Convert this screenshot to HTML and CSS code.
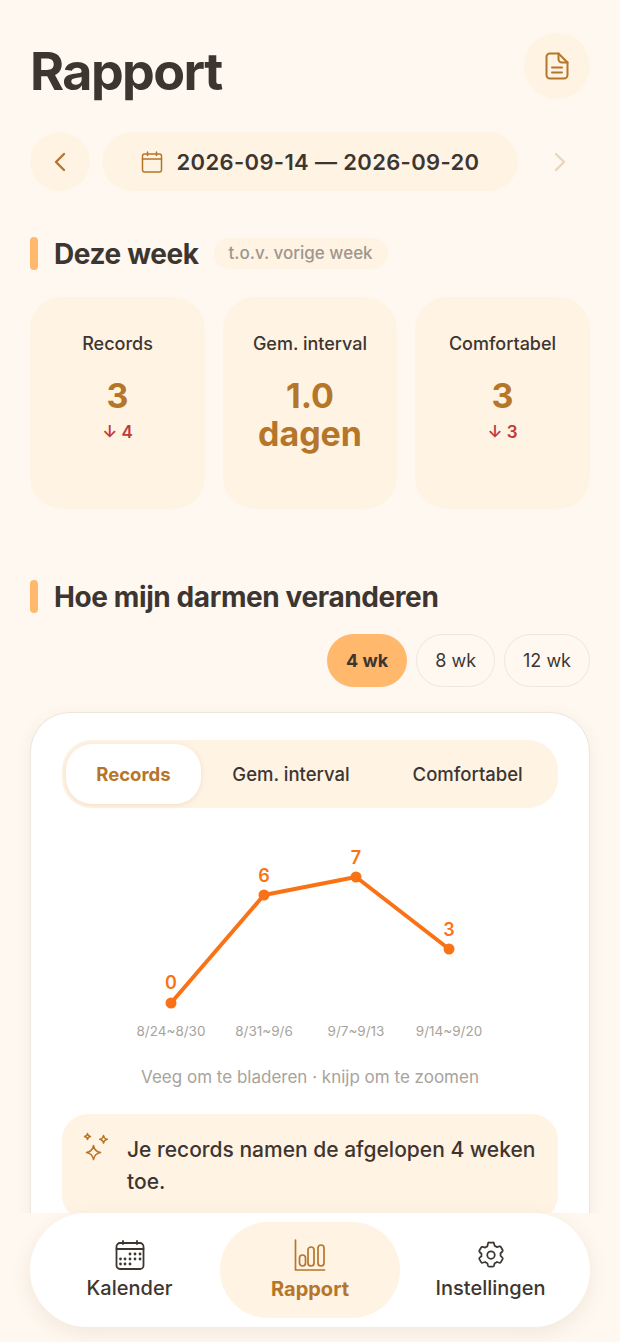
FILE: index.html
```html
<!DOCTYPE html>
<html>
<head>
    <meta charset="UTF-8" />
    <meta name="viewport" content="width=device-width, initial-scale=1.0" />
    <title>Rapport</title>
    <link rel="stylesheet" href="styles.css">
</head>
<body>
    <div class="screen">
        <div class="content">
            <header class="top">
                <h1>Rapport</h1>
                <button class="round-btn doc-btn">
                    <svg width="26" height="28" viewBox="0 0 26 28" fill="none" stroke="#b5762a" stroke-width="2" stroke-linejoin="round" stroke-linecap="round">
                        <path d="M6 1.5h8.5L23.5 10.5v12.5a3.5 3.5 0 0 1-3.5 3.5H6a3.5 3.5 0 0 1-3.5-3.5V5A3.5 3.5 0 0 1 6 1.5z"/>
                        <path d="M14.5 1.5v5.5a3.5 3.5 0 0 0 3.5 3.5h5.5"/>
                        <path d="M8 15.5h10M8 20.5h10"/>
                    </svg>
                </button>
            </header>

            <div class="date-row">
                <button class="round-btn nav-btn">
                    <svg width="14" height="20" viewBox="0 0 14 20" fill="none" stroke="#b5762a" stroke-width="2.4" stroke-linecap="round" stroke-linejoin="round"><path d="M11 2L3 10l8 8"/></svg>
                </button>
                <div class="date-pill">
                    <svg width="22" height="22" viewBox="0 0 22 22" fill="none" stroke="#b5762a" stroke-width="1.5" stroke-linecap="round" stroke-linejoin="round">
                        <rect x="1.5" y="3" width="19" height="18" rx="2"/>
                        <path d="M1.5 8h19M6.5 1v3.5M15.500 1v3.5"/>
                    </svg>
                    <span>2026-09-14 — 2026-09-20</span>
                </div>
                <button class="round-btn nav-btn next">
                    <svg width="14" height="20" viewBox="0 0 14 20" fill="none" stroke="#e9d6bd" stroke-width="2.4" stroke-linecap="round" stroke-linejoin="round"><path d="M3 2l8 8-8 8"/></svg>
                </button>
            </div>

            <div class="section-head week-head">
                <span class="section-bar"></span>
                <h2>Deze week</h2>
                <span class="compare">t.o.v. vorige week</span>
            </div>

            <div class="stats">
                <div class="stat">
                    <div class="stat-label">Records</div>
                    <div class="stat-value">3</div>
                    <div class="stat-delta">↓ 4</div>
                </div>
                <div class="stat">
                    <div class="stat-label">Gem. interval</div>
                    <div class="stat-value">1.0 dagen</div>
                </div>
                <div class="stat">
                    <div class="stat-label">Comfortabel</div>
                    <div class="stat-value">3</div>
                    <div class="stat-delta">↓ 3</div>
                </div>
            </div>

            <div class="section-head trend-head">
                <span class="section-bar"></span>
                <h2>Hoe mijn darmen veranderen</h2>
            </div>

            <div class="chips">
                <button class="chip active">4 wk</button>
                <button class="chip">8 wk</button>
                <button class="chip">12 wk</button>
            </div>

            <div class="chart-card">
                <div class="tabs">
                    <div class="tab active">Records</div>
                    <div class="tab">Gem. interval</div>
                    <div class="tab">Comfortabel</div>
                </div>

                <svg class="chart" width="496" height="220" viewBox="0 0 496 220">
                    <polyline points="109,175 202,67 294,49 387,121" fill="none" stroke="#f97316" stroke-width="4" stroke-linejoin="round"/>
                    <circle cx="109" cy="175" r="5.500" fill="#f97316"/>
                    <circle cx="202" cy="67" r="5.500" fill="#f97316"/>
                    <circle cx="294" cy="49" r="5.500" fill="#f97316"/>
                    <circle cx="387" cy="121" r="5.500" fill="#f97316"/>
                    <text class="point" x="109" y="161">0</text>
                    <text class="point" x="202" y="54">6</text>
                    <text class="point" x="294" y="36">7</text>
                    <text class="point" x="387" y="108">3</text>
                    <text class="tick" x="109" y="208">8/24~8/30</text>
                    <text class="tick" x="202" y="208">8/31~9/6</text>
                    <text class="tick" x="294" y="208">9/7~9/13</text>
                    <text class="tick" x="387" y="208">9/14~9/20</text>
                </svg>

                <div class="hint">Veeg om te bladeren · knijp om te zoomen</div>

                <div class="insight">
                    <svg width="30" height="30" viewBox="0 0 30 30" fill="none" stroke="#b5762a" stroke-width="1.500" stroke-linejoin="round">
                        <path d="M11.500 9.500c.8 4.500 2.500 6.200 7 7-4.500.8-6.200 2.500-7 7-.8-4.500-2.500-6.200-7-7 4.500-.8 6.200-2.500 7-7z" transform="translate(0 4)"/>
                        <path d="M5.500 1.500c.3 2 1 2.700 3 3-2 .3-2.700 1-3 3-.3-2-1-2.700-3-3 2-.3 2.700-1 3-3z"/>
                        <path d="M21.500 3.500c.4 2.500 1.300 3.400 3.800 3.800-2.500.4-3.400 1.300-3.800 3.800-.4-2.500-1.300-3.400-3.800-3.800 2.500-.4 3.400-1.300 3.800-3.800z"/>
                    </svg>
                    <p>Je records namen de afgelopen 4 weken toe.</p>
                </div>
            </div>
        </div>

        <div class="tabbar-wrap">
            <nav class="tabbar">
                <div class="tabbar-item">
                    <svg width="30" height="30" viewBox="0 0 30 30" fill="none" stroke="#3d3630" stroke-width="1.800" stroke-linecap="round" stroke-linejoin="round">
                        <rect x="1.500" y="3" width="27" height="26" rx="3.500"/>
                        <path d="M1.500 9h27M8 1v3M22 1v3"/>
                        <g fill="#3d3630" stroke="none">
                            <circle cx="15" cy="14" r="1.400"/><circle cx="20" cy="14" r="1.400"/><circle cx="25" cy="14" r="1.400"/>
                            <circle cx="5.500" cy="19" r="1.400"/><circle cx="10" cy="19" r="1.400"/><circle cx="15" cy="19" r="1.400"/><circle cx="20" cy="19" r="1.400"/><circle cx="25" cy="19" r="1.400"/>
                            <circle cx="5.500" cy="24" r="1.400"/><circle cx="10" cy="24" r="1.400"/><circle cx="15" cy="24" r="1.400"/>
                        </g>
                    </svg>
                    <span>Kalender</span>
                </div>
                <div class="tabbar-item active">
                    <svg width="32" height="32" viewBox="0 0 32 32" fill="none" stroke="#b5762a" stroke-width="1.700" stroke-linecap="round" stroke-linejoin="round">
                        <path d="M1.500 1v30h29"/>
                        <rect x="5.500" y="16" width="6" height="11" rx="3"/>
                        <rect x="14" y="8" width="6" height="19" rx="3"/>
                        <rect x="24" y="6" width="6" height="21" rx="3"/>
                    </svg>
                    <span>Rapport</span>
                </div>
                <div class="tabbar-item">
                    <svg width="30" height="30" viewBox="0 0 24 24" fill="none" stroke="#3d3630" stroke-width="1.400" stroke-linecap="round" stroke-linejoin="round">
                        <path d="M9.600 2.700A1 1 0 0 1 10.600 2h2.800a1 1 0 0 1 1 .7l.5 2a7.500 7.500 0 0 1 1.800 1l2-.6a1 1 0 0 1 1.200.5l1.400 2.400a1 1 0 0 1-.2 1.200l-1.500 1.400a7.500 7.500 0 0 1 0 2l1.500 1.500a1 1 0 0 1 .2 1.200l-1.400 2.400a1 1 0 0 1-1.200.5l-2-.6a7.500 7.500 0 0 1-1.800 1l-.5 2a1 1 0 0 1-1 .7h-2.800a1 1 0 0 1-1-.7l-.5-2a7.500 7.500 0 0 1-1.800-1l-2 .6a1 1 0 0 1-1.200-.5l-1.400-2.400a1 1 0 0 1 .2-1.200L4.400 13a7.500 7.500 0 0 1 0-2L2.900 9.600a1 1 0 0 1-.2-1.200l1.400-2.400a1 1 0 0 1 1.200-.5l2 .6a7.500 7.500 0 0 1 1.800-1z"/>
                        <circle cx="12" cy="12" r="3"/>
                    </svg>
                    <span>Instellingen</span>
                </div>
            </nav>
        </div>
    </div>
</body>
</html>
```
FILE: styles.css
```css
* { box-sizing: border-box; }
body { margin: 0; font-family: Inter, sans-serif; color: #3d3630; background: #fff8f0; }
h1, h2, p { margin: 0; }
button { font-family: inherit; color: inherit; border: none; padding: 0; }

.screen { position: relative; width: 620px; height: 1342px; overflow: hidden; }
.content { padding: 33px 30px 0; }

.top { display: flex; justify-content: space-between; align-items: center; height: 66px; }
.top h1 { font-size: 52px; font-weight: 700; letter-spacing: -1.6px; line-height: 66px; padding-top: 11px; }
.round-btn { display: flex; align-items: center; justify-content: center; border-radius: 50%; background: #fff3e4; }
.doc-btn { width: 66px; height: 66px; }

.date-row { display: flex; gap: 12px; margin-top: 33px; height: 59px; }
.nav-btn { width: 60px; height: 59px; flex: none; }
.nav-btn.next { background: #fff8f0; }
.date-pill { flex: 1; display: flex; align-items: center; justify-content: center; gap: 14px; border-radius: 30px; background: #fff3e4; font-size: 22px; font-weight: 600; letter-spacing: 0.35px; }

.section-head { display: flex; align-items: center; height: 33px; }
.section-bar { width: 8px; height: 33px; border-radius: 4px; background: #ffb86c; margin-right: 16px; }
.section-head h2 { font-size: 28px; font-weight: 700; letter-spacing: -0.4px; }
.week-head { margin-top: 46px; }
.trend-head { margin-top: 71px; }
.compare { margin-left: 15px; padding: 0 15px; height: 31px; line-height: 31px; border-radius: 16px; background: #fff3e4; font-size: 17px; font-weight: 500; color: #9d978e; }

.stats { display: grid; grid-template-columns: 175px 174px 175px; gap: 18px; margin-top: 27px; }
.stat { height: 212px; padding-top: 35px; border-radius: 32px; background: #fff3e4; text-align: center; }
.stat-label { font-size: 18px; font-weight: 500; line-height: 24px; }
.stat-value { margin-top: 21px; font-size: 34px; font-weight: 700; line-height: 38px; color: #b5762a; padding: 0 30px; }
.stat-delta { margin-top: 5px; font-size: 17px; font-weight: 600; line-height: 24px; color: #c0393b; }

.chips { display: flex; justify-content: flex-end; gap: 9px; margin-top: 21px; }
.chip { height: 53px; padding: 0 18px; border-radius: 27px; border: 1.500px solid #ebe6de; background: #fff8f0; font-size: 18px; }
.chip.active { border-color: #ffb86c; background: #ffb86c; font-weight: 700; }

.chart-card { margin-top: 25px; height: 620px; padding: 27px 31px; border: 1px solid #ebe6de; border-radius: 40px; background: #fff; box-shadow: 0 4px 16px rgba(120, 90, 50, 0.08); }
.tabs { display: flex; align-items: center; height: 68px; padding: 0 4px; border-radius: 30px; background: #fff3e4; }
.tab { font-size: 18.500px; font-weight: 500; text-align: center; }
.tab:nth-child(2) { width: 181px; }
.tab:nth-child(3) { width: 173px; }
.tab.active { width: 135px; height: 60px; line-height: 60px; border-radius: 26px; background: #fff; color: #b5762a; font-weight: 700; box-shadow: 0 1px 5px rgba(180, 120, 50, 0.18); }

.chart { display: block; margin-top: 20px; }
.chart text { text-anchor: middle; font-family: Inter, sans-serif; }
.point { font-size: 18px; font-weight: 600; fill: #f97316; }
.tick { font-size: 13.500px; fill: #a8a39b; }

.hint { margin-top: 17px; text-align: center; font-size: 17px; line-height: 24px; color: #a8a39b; }

.insight { display: flex; gap: 15px; margin-top: 25px; padding: 20px 20px 24px; border-radius: 26px; background: #fff3e4; }
.insight svg { flex: none; margin-top: -2px; }
.insight p { font-size: 21px; font-weight: 500; line-height: 31.500px; }

.tabbar-wrap { position: absolute; left: 0; right: 0; bottom: 0; height: 129px; padding: 0 30px 15px; background: #fff8f0; }
.tabbar { display: flex; align-items: center; height: 114px; padding: 0 9px; border-radius: 57px; background: #fff; box-shadow: 0 6px 20px rgba(120, 90, 50, 0.1); }
.tabbar-item { display: flex; flex-direction: column; align-items: center; justify-content: center; gap: 6px; flex: 1; height: 96px; font-size: 20px; font-weight: 500; border-radius: 48px; }
.tabbar-item.active { flex: none; width: 180px; margin: 0 0; background: #fff3e4; color: #b5762a; font-weight: 700; }
```
